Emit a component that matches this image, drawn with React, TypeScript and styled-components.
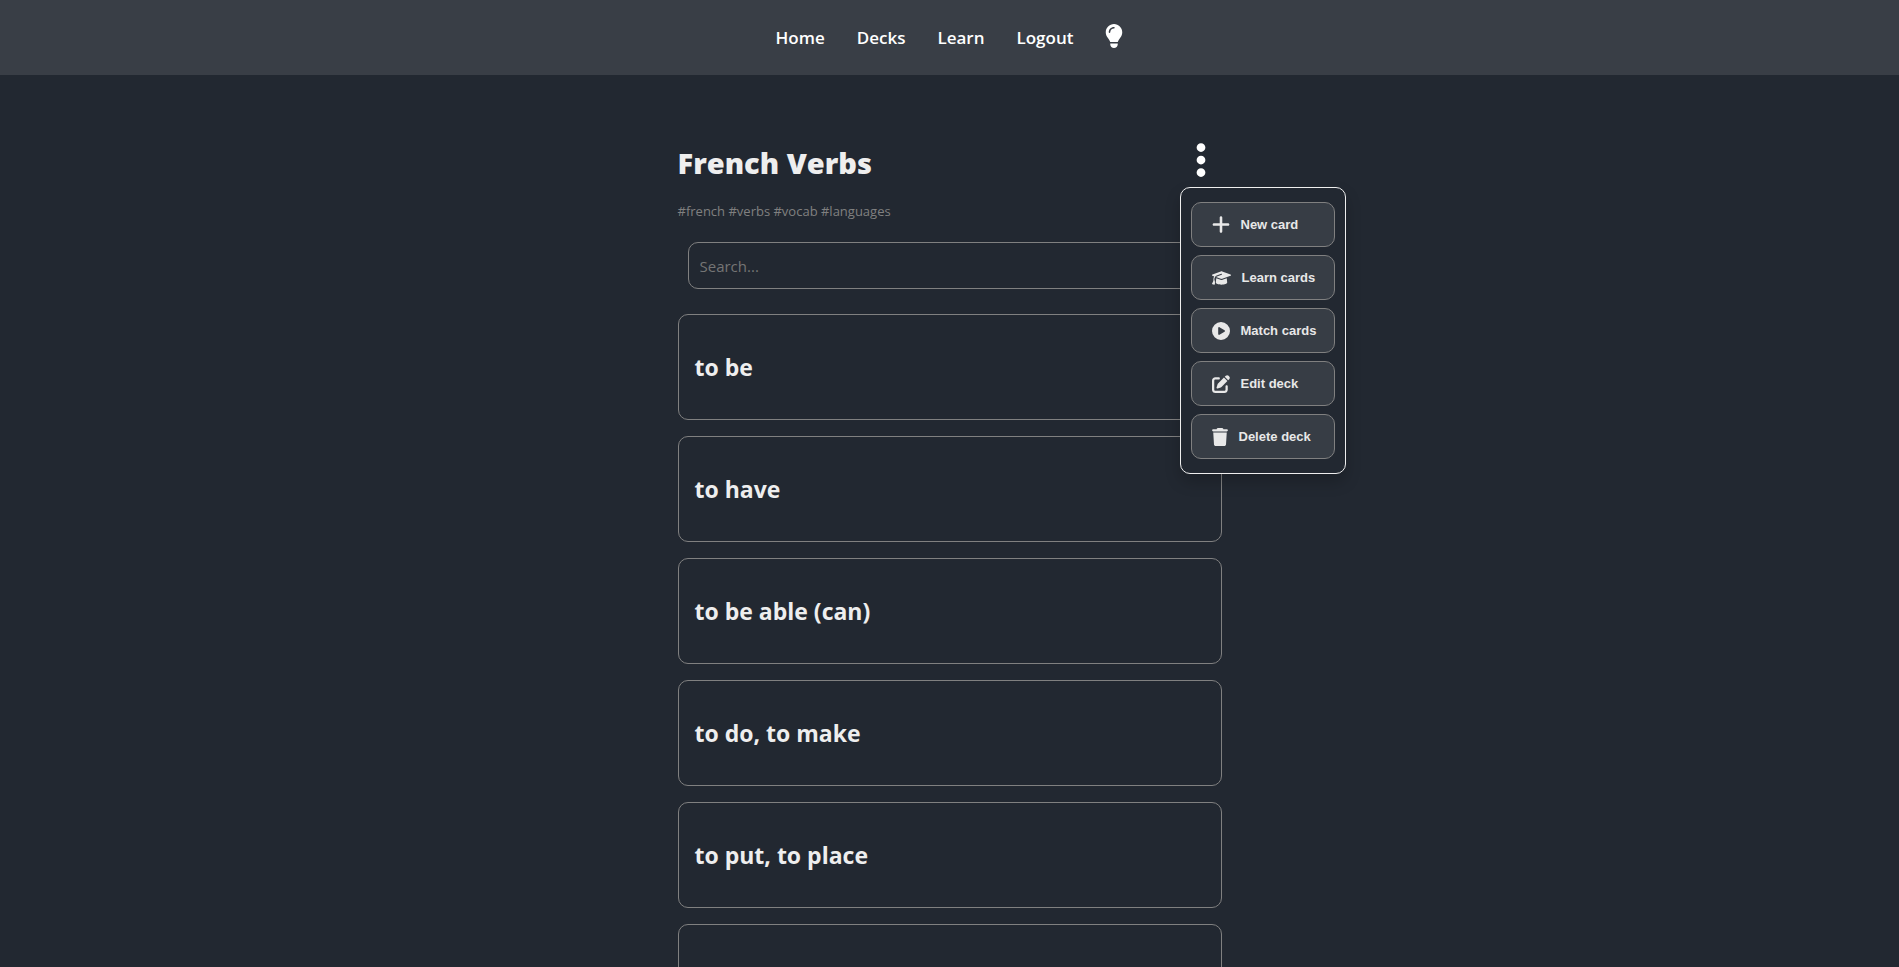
import React from "react";
import styled, { createGlobalStyle } from "styled-components";
import {
  FaLightbulb,
  FaEllipsisVertical,
  FaPlus,
  FaGraduationCap,
  FaCirclePlay,
  FaPenToSquare,
  FaTrash,
} from "react-icons/fa6";

const GlobalStyle = createGlobalStyle`
  * { box-sizing: border-box; }
  body {
    margin: 0;
    background: #222831;
    color: #eeeeee;
    font-family: "Open Sans", "Noto Sans", sans-serif;
  }
`;

const Page = styled.div`
  height: 100vh;
  overflow: hidden;
`;

const Header = styled.header`
  background: #393e46;
`;

const Nav = styled.nav`
  display: flex;
  justify-content: center;
  align-items: center;
  gap: 32px;
  height: 75px;
`;

const NavLink = styled.a`
  color: #ffffff;
  font-size: 17px;
  line-height: 24px;
  font-weight: 600;
  text-decoration: none;
`;

const IconBox = styled.span<{ $width: number; $height: number }>`
  display: flex;
  flex-shrink: 0;
  width: ${({ $width }) => $width}px;
  height: ${({ $height }) => $height}px;

  svg {
    width: 100%;
    height: 100%;
  }
`;

const IconButton = styled.button`
  display: flex;
  padding: 0;
  border: 0;
  background: none;
  color: #ffffff;
  cursor: pointer;
`;

const ThemeButton = styled(IconButton)`
  padding-bottom: 4px;
`;

const OptionsButton = styled(IconButton)`
  justify-content: center;
  align-items: center;
  width: 42px;
  height: 42px;
`;

const Main = styled.main`
  width: 544px;
  max-width: 100%;
  margin: 0 auto;
  padding-top: 64px;
`;

const TitleRow = styled.div`
  display: flex;
  justify-content: space-between;
  align-items: flex-start;
`;

const Title = styled.h1`
  margin: 0;
  font-size: 29px;
  line-height: 48px;
  font-weight: 800;
`;

const MenuAnchor = styled.div`
  position: relative;
`;

const Menu = styled.div`
  position: absolute;
  top: 48px;
  left: 0;
  z-index: 1;
  display: flex;
  flex-direction: column;
  gap: 8px;
  width: 166px;
  padding: 14px 10px;
  border: 1px solid #eeeeee;
  border-radius: 10px;
  background: #222831;
  box-shadow: 0 8px 16px rgba(0, 0, 0, 0.2);
`;

const MenuButton = styled.button`
  display: flex;
  align-items: center;
  gap: 11px;
  height: 45px;
  padding: 0 0 0 20px;
  border: 1px solid gray;
  border-radius: 10px;
  background: #373d45;
  color: #e8e8e8;
  font: bold 13px "Liberation Sans", Arial, sans-serif;
  white-space: nowrap;
  cursor: pointer;
`;

const Tags = styled.p`
  margin: 14px 0 21px;
  color: gray;
  font-size: 13px;
  line-height: 20px;
`;

const Search = styled.input`
  display: block;
  width: calc(100% - 20px);
  height: 47px;
  margin: 0 10px 25px;
  padding: 0 11px;
  border: 1px solid gray;
  border-radius: 10px;
  background: transparent;
  color: #eeeeee;
  font-family: inherit;
  font-size: 15px;
  &::placeholder { color: #757575; }
`;

const CardList = styled.ul`
  display: flex;
  flex-direction: column;
  gap: 16px;
  margin: 0;
  padding: 0;
  list-style: none;
`;

const Card = styled.li`
  padding: 35px 16px;
  border: 1px solid gray;
  border-radius: 10px;
`;

const CardTitle = styled.h2`
  margin: 0;
  font-size: 23px;
  line-height: 34px;
  font-weight: 700;
`;

const links = ["Home", "Decks", "Learn", "Logout"];
const actions = [
  { label: "New card", Icon: FaPlus, width: 18, height: 21 },
  { label: "Learn cards", Icon: FaGraduationCap, width: 19, height: 18 },
  { label: "Match cards", Icon: FaCirclePlay, width: 18, height: 18 },
  { label: "Edit deck", Icon: FaPenToSquare, width: 18, height: 18 },
  { label: "Delete deck", Icon: FaTrash, width: 16, height: 18 },
];
const cards = ["to be", "to have", "to be able (can)", "to do, to make", "to put, to place"];

export default function App() {
  return (
    <Page>
      <GlobalStyle />
      <Header>
        <Nav>
          {links.map((label) => (
            <NavLink key={label} href="#">{label}</NavLink>
          ))}
          <ThemeButton aria-label="Toggle theme">
            <IconBox $width={18} $height={24}><FaLightbulb /></IconBox>
          </ThemeButton>
        </Nav>
      </Header>
      <Main>
        <TitleRow>
          <Title>French Verbs</Title>
          <MenuAnchor>
            <OptionsButton aria-label="Deck options"><FaEllipsisVertical size={40} /></OptionsButton>
            <Menu>
              {actions.map(({ label, Icon, width, height }) => (
                <MenuButton key={label}>
                  <IconBox $width={width} $height={height}><Icon /></IconBox>
                  {label}
                </MenuButton>
              ))}
            </Menu>
          </MenuAnchor>
        </TitleRow>
        <Tags>#french #verbs #vocab #languages</Tags>
        <Search type="search" aria-label="Search cards" placeholder="Search..." />
        <CardList>
          {cards.map((title) => (
            <Card key={title}><CardTitle>{title}</CardTitle></Card>
          ))}
          <Card><CardTitle>&nbsp;</CardTitle></Card>
        </CardList>
      </Main>
    </Page>
  );
}
